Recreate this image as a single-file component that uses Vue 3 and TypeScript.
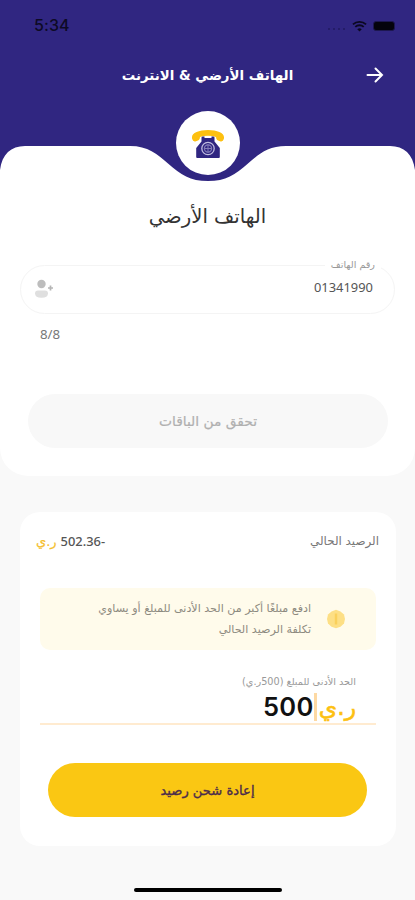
<script setup lang="ts">
import { ref } from 'vue'

const phone = ref<string>('01341990')
const amount = ref<string>('500')
const notice: string[] = [
  'ادفع مبلغًا أكبر من الحد الأدنى للمبلغ أو يساوي',
  'تكلفة الرصيد الحالي',
]
</script>

<template>
  <main class="screen" dir="rtl">
    <header class="header">
      <div class="status" dir="ltr">
        <span class="clock">5:34</span>
        <div class="indicators">
          <span class="signal"><i v-for="n in 4" :key="n" /></span>
          <svg class="wifi" viewBox="0 0 16 12">
            <path d="M1 4.3A10.4 10.4 0 0 1 15 4.3M3.5 7A6.6 6.6 0 0 1 12.500 7" />
            <path class="solid" d="M8 11.800 5.600 9.400A3.500 3.500 0 0 1 10.400 9.400Z" />
          </svg>
          <span class="battery" />
        </div>
      </div>
      <div class="bar">
        <svg class="back" viewBox="0 0 18 16"><path d="M1.500 8H16M9.500 1.500 16 8 9.500 14.500" /></svg>
        <h1 class="title">الهاتف الأرضي &amp; الانترنت</h1>
      </div>
    </header>

    <section class="sheet">
      <svg class="edge" viewBox="0 0 415 36" preserveAspectRatio="none">
        <rect width="415" height="36" fill="#302681" />
        <path d="M0 24C2 8 11 0 25 0H130C148 0 157 8 168 17.500C181 29 190 35 208 35C226 35 235 29 248 17.500C259 8 268 0 286 0H390C404 0 413 8 415 24V36H0Z" fill="#fff" />
      </svg>
      <div class="badge">
        <svg viewBox="0 0 34 30">
          <path d="M1.200 10C-.5 4.500 7 1 17 1S34.500 4.500 32.800 10Q32 13.200 29 12.200L26.500 11.200Q25 10.500 25 8Q17 5.500 9 8Q9 10.500 7.500 11.200L5 12.200Q2 13.200 1.200 10Z" fill="#fdc010" />
          <path d="M10.500 8.500Q10.500 7.500 12 7.500H13.500V9H20.500V7.500H22Q23.500 7.500 23.500 8.500V12.500L28.800 19V28Q28.800 29 27.800 29H6.200Q5.200 29 5.200 28V19L10.500 12.500Z" fill="#302681" />
          <circle cx="17" cy="19.500" r="6.200" fill="none" stroke="#c0bce0" stroke-width="1.300" />
          <circle cx="17" cy="19.500" r="3.600" fill="none" stroke="#827bb8" stroke-width="1.200" />
          <path d="M17 15.500V23.500M13 19.500H21" stroke="#827bb8" />
        </svg>
      </div>
      <h2 class="heading"><span>الهاتف الأرضي</span></h2>
      <div class="field">
        <span class="legend">رقم الهاتف</span>
        <span class="number" dir="ltr">{{ phone }}</span>
        <svg class="contact" viewBox="0 0 20 20">
          <circle cx="7.500" cy="5" r="4.200" fill="#bdbdbd" />
          <path d="M1 14.500Q1 11.500 4 11.500H11Q14 11.500 14 14.500Q14 18.700 7.500 18.700T1 14.500Z" fill="#dfdfdf" />
          <path d="M16.500 6.500V11.500M14 9H19" stroke="#b5b5b5" stroke-width="1.700" />
        </svg>
      </div>
      <div class="counter" dir="ltr">{{ phone.length }}/8</div>
      <button class="check">تحقق من الباقات</button>
    </section>

    <section class="card">
      <div class="balance">
        <span class="label">الرصيد الحالي</span>
        <span class="value" dir="ltr"><b>ر.ي</b><em>502.36-</em></span>
      </div>
      <div class="notice">
        <svg class="alert" viewBox="0 0 18 20">
          <path d="M9 .8 13.500 2.500 17 5.500 18 10 17 14.500 13.500 17.800 9 19.200 4.500 17.800 1 14.500 0 10 1 5.500 4.500 2.500Z" fill="#fddf85" />
          <path d="M9 4.500V15.500" stroke="#fad05c" stroke-width="2.500" />
        </svg>
        <p><span v-for="line in notice" :key="line">{{ line }}</span></p>
      </div>
      <div class="minimum">الحد الأدنى للمبلغ (500ر.ي)</div>
      <div class="amount" dir="ltr">
        <span class="digits">{{ amount }}</span><i class="caret" /><span class="currency">ر.ي</span>
      </div>
      <button class="recharge">إعادة شحن رصيد</button>
    </section>
    <div class="home" />
  </main>
</template>

<style>
body { background: #f9f9f9; }
</style>

<style scoped>
* { box-sizing: border-box; }
.screen {
  width: 415px; height: 900px; overflow: hidden; background: #f9f9f9;
  display: flex; flex-direction: column;
  font-family: "DejaVu Sans", sans-serif; white-space: nowrap;
}
h1, h2, p { margin: 0; font-weight: 400; }
button { border: 0; font-family: inherit; padding: 0; display: block; }
.header { height: 146px; background: #302681; color: #fff; flex: none; }
.status { height: 51px; padding: 0 20px 0 34px; display: flex; justify-content: space-between; align-items: center; }
.clock { font: 500 16px/51px Inter, sans-serif; color: #0d0a25; letter-spacing: .1px; }
.indicators { display: flex; align-items: center; gap: 6px; }
.signal { display: flex; gap: 3px; padding-top: 7px; margin-right: 1px; }
.signal i { width: 2px; height: 2px; border-radius: 1px; background: #211a60; }
.wifi { width: 15px; height: 12px; fill: none; stroke: #0b0820; stroke-width: 2; }
.wifi .solid { fill: #0b0820; stroke: none; }
.battery { width: 22px; height: 10px; border-radius: 3px; background: #04030c; border: 1px solid #1d1750; }
.bar { height: 48px; display: grid; grid-template-columns: 48px 1fr 48px; align-items: center; padding: 0 16px; }
.back { width: 18px; height: 16px; justify-self: center; fill: none; stroke: #fff; stroke-width: 2; stroke-linecap: round; }
.title { font-size: 13.400px; font-weight: 700; text-align: center; }
.sheet { height: 330px; flex: none; position: relative; background: #fff; border-radius: 0 0 28px 28px; display: flex; flex-direction: column; }
.edge { width: 415px; height: 36px; display: block; flex: none; }
.badge { position: absolute; left: 176px; top: -35px; width: 64px; height: 64px; border-radius: 50%; background: #fff; display: grid; place-items: center; }
.badge svg { width: 34px; height: 30px; margin-top: 1px; }
.heading { height: 69px; font-size: 19.600px; line-height: 69px; text-align: center; color: #333; }
.field { height: 49px; margin: 14px 20px 0; border: 1px solid #f4f4f4; border-radius: 25px; position: relative; display: flex; align-items: center; justify-content: space-between; padding: 0 21px 0 13px; }
.legend { position: absolute; right: 13px; top: -8px; padding: 0 6px; background: #fff; font-size: 9.600px; line-height: 14px; color: #999; }
.number { font: 12.900px/20px "Noto Sans", sans-serif; color: #555; padding-bottom: 6px; }
.contact { width: 20px; height: 20px; margin-bottom: 1px; }
.counter { height: 20px; margin: 10px 0 0; padding-left: 40px; font: 13.300px/20px "Noto Sans", sans-serif; color: #777; }
.check { height: 54px; margin: 50px 27px 0 28px; border-radius: 27px; background: #f8f8f8; color: #b0b0b0; font-size: 13.800px; -webkit-text-stroke: .2px #b0b0b0; }
.card { width: 376px; height: 334px; margin: 36px 19px 0; flex: none; background: #fff; border-radius: 20px; display: flex; flex-direction: column; }
.balance { height: 58px; padding: 0 17px 0 16px; display: flex; justify-content: space-between; align-items: center; }
.label { font-size: 11.900px; color: #777; }
.value { display: flex; gap: 4px; align-items: center; }
.value b { font-weight: 400; font-size: 13px; color: #f5c02e; -webkit-text-stroke: .2px #f5c02e; }
.value em { font: 500 12.900px/20px "Noto Sans", sans-serif; color: #555; }
.notice { height: 62px; margin: 18px 20px 0; border-radius: 10px; background: #fffbeb; display: flex; align-items: center; padding-right: 31px; gap: 16px; }
.alert { width: 18px; height: 20px; }
.notice p { font-size: 11.100px; line-height: 21px; color: #8d8a80; }
.notice span { display: block; }
.minimum { height: 18px; margin: 23px 40px 0; font-size: 9.700px; line-height: 18px; color: #999; }
.amount { height: 34px; margin: 0 20px; padding-right: 20px; border-bottom: 2px solid #ffebd0; display: flex; align-items: center; justify-content: flex-end; }
.digits { font: 600 25.500px/32px Inter, sans-serif; color: #111; letter-spacing: .4px; }
.caret { width: 3px; height: 28px; background: #fdd9a3; margin-right: 2px; }
.currency { font-size: 23.500px; line-height: 30px; color: #fdc010; -webkit-text-stroke: .6px #fdc010; }
.recharge { height: 54px; margin: 38px 29px 0 28px; border-radius: 27px; background: #fac713; color: #4c2c4b; font-size: 13.100px; -webkit-text-stroke: .35px #4c2c4b; }
.home { width: 148px; height: 4px; margin: 42px auto 0; border-radius: 2px; background: #000; }
</style>
